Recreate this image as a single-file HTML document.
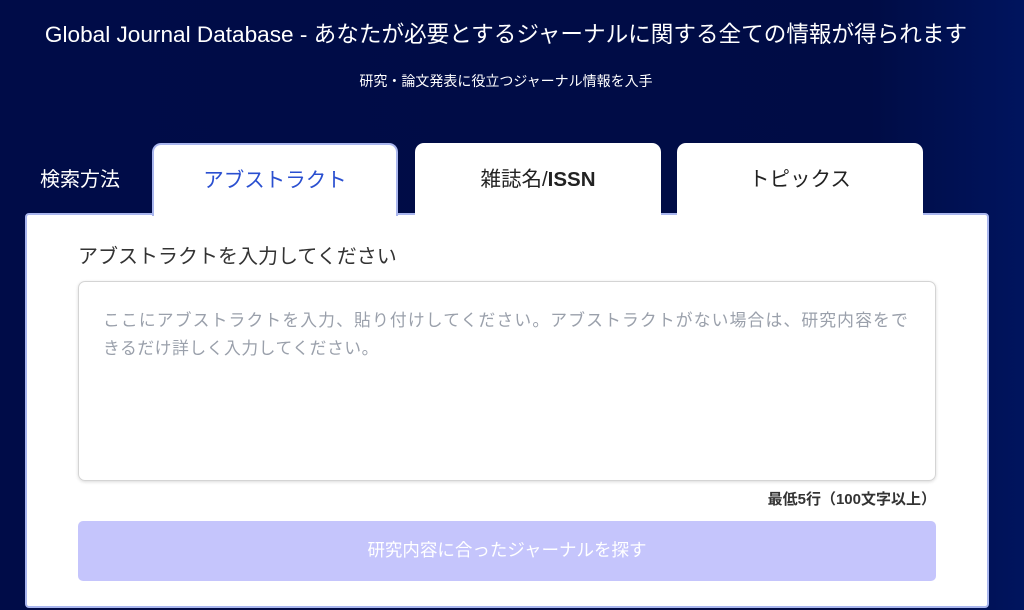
<!DOCTYPE html>
<html><head><meta charset="utf-8"><style>
*{margin:0;padding:0;box-sizing:border-box}
body{width:1024px;height:610px;overflow:hidden;background:linear-gradient(90deg,#000c48 0%,#000c45 85%,#00145e 100%);font-family:"Liberation Sans","Noto Sans CJK JP",sans-serif;position:relative}
.t1{position:absolute;left:0;width:1012px;top:16px;text-align:center;color:#fff;font-size:22.6px;white-space:nowrap}
.t2{position:absolute;left:0;width:1012px;top:71px;text-align:center;color:#fff;font-size:14px}
.lbl{position:absolute;left:40px;top:163px;color:#fff;font-size:20px}
.tab{position:absolute;top:143px;height:72px;width:246px;background:#fff;border-radius:9px 9px 0 0;text-align:center;padding-top:19px;font-size:20.5px;color:#222}
.act{border:2px solid #a9b6ee;border-bottom:none;color:#2a4fd0;z-index:2;height:73px;padding-top:18px}
.panel{position:absolute;left:25px;top:213px;width:964px;height:395px;background:#fff;border:2px solid #a9b6ee;border-radius:4px}
.h{position:absolute;left:78px;top:240px;font-size:20px;color:#333}
.ta{position:absolute;left:78px;top:281px;width:858px;height:200px;border:1px solid #d4d4d4;border-radius:7px;box-shadow:0 1px 3px rgba(0,0,0,.15);padding:25px 0 0 24px;font-size:16.8px;line-height:28px;letter-spacing:0.55px;color:#9aa0ab;white-space:nowrap}
.l1{letter-spacing:1.15px}
.min{position:absolute;right:88px;top:488px;font-size:15px;font-weight:bold;color:#333;white-space:nowrap}
.btn{position:absolute;left:78px;top:521px;width:858px;height:60px;background:#c5c5fc;border-radius:5px;color:#fff;font-size:17.5px;text-align:center;line-height:58px}
</style></head><body>
<div class="t1">Global Journal Database - あなたが必要とするジャーナルに関する全ての情報が得られます</div>
<div class="t2">研究・論文発表に役立つジャーナル情報を入手</div>
<div class="lbl">検索方法</div>
<div class="panel"></div>
<div class="tab act" style="left:152px">アブストラクト</div>
<div class="tab" style="left:415px">雑誌名/<b>ISSN</b></div>
<div class="tab" style="left:677px">トピックス</div>
<div class="h">アブストラクトを入力してください</div>
<div class="ta"><span class="l1">ここにアブストラクトを入力、貼り付けしてください。アブストラクトがない場合は、研究内容をで</span><br>きるだけ詳しく入力してください。</div>
<div class="min">最低5行（100文字以上）</div>
<div class="btn">研究内容に合ったジャーナルを探す</div>
</body></html>
